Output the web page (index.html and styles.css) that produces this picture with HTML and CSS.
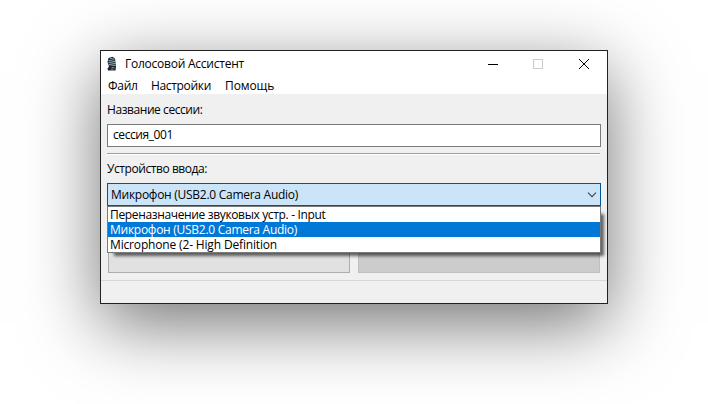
FILE: index.html
```html
<!DOCTYPE html>
<html lang="ru">
<head>
<meta charset="utf-8">
<title>Голосовой Ассистент</title>
<link rel="stylesheet" href="styles.css">
</head>
<body>
<main class="window">
  <header class="titlebar">
    <svg class="app-icon" width="12" height="16" viewBox="0 0 12 16" aria-hidden="true">
      <path d="M2.500 2 6.500.800 9 2.500 10 10.500 9.500 14.500H2L1.500 12.500 3 10.500 1.500 6z" fill="#1d242c"/>
      <path d="M4 2.500l4.500.700M2.500 4.500l6.500 1M2.500 6.500l7 1M3 8.500l6.500 1" stroke="#a9c4da" stroke-width=".900" fill="none"/>
      <path d="M5.500 11.300l3 .500M5 13.200h2.500" stroke="#85898e" stroke-width="1" fill="none"/>
    </svg>
    <h1 class="title">Голосовой Ассистент</h1>
    <div class="controls">
      <svg width="46" height="23" viewBox="0 0 46 23" shape-rendering="crispEdges"><path d="M18 12.500h10" stroke="#000"/></svg>
      <svg width="45" height="23" viewBox="0 0 45 23" shape-rendering="crispEdges"><path d="M17.500 7.500h9v9h-9z" stroke="#ccc" fill="none"/></svg>
      <svg width="46" height="23" viewBox="0 0 46 23"><path d="M18 7l10 10M28 7 18 17" stroke="#000" stroke-width="1"/></svg>
    </div>
  </header>
  <nav class="menu">
    <span class="m1">Файл</span><span class="m2">Настройки</span><span class="m3">Помощь</span>
  </nav>
  <section class="form">
    <div class="label l1">Название сессии:</div>
    <div class="input"><span>сессия_001</span></div>
    <div class="separator"></div>
    <div class="label l2">Устройство ввода:</div>
    <div class="combo">
      <span class="mic">Микрофон (USB2.0 Camera Audio)</span>
      <svg class="chevron" width="10" height="6" viewBox="0 0 10 6"><path d="M1 .700 5 4.700 9 .700" stroke="#444" stroke-width="1.100" fill="none"/></svg>
      <div class="options">
        <div class="option"><span class="o1">Переназначение звуковых устр. - Input</span></div>
        <div class="option selected"><span class="mic">Микрофон (USB2.0 Camera Audio)</span></div>
        <div class="option"><span class="o3">Microphone (2- High Definition</span></div>
      </div>
    </div>
    <div class="buttons"><div class="button"></div><div class="button disabled"></div></div>
  </section>
  <footer class="status"></footer>
</main>
</body>
</html>
```
FILE: styles.css
```css
* { box-sizing: border-box; }
html { background: #fff; }
body {
  margin: 0;
  height: 404px;
  overflow: hidden;
  padding: 50px 100px;
  font: 12px/15px "Open Sans", "Noto Sans", sans-serif;
  color: #000;
}
.window {
  width: 508px;
  height: 254px;
  border: 1px solid #222;
  background: #f0f0f0;
  box-shadow: 0 20px 68px rgba(0, 0, 0, .55);
  display: flex;
  flex-direction: column;
  white-space: nowrap;
}
.titlebar { height: 25px; display: flex; align-items: center; background: #fff; padding-left: 5px; }
.title { margin: 0 auto 0 7px; font-size: 12px; font-weight: 400; letter-spacing: -.24px; }
.controls { display: flex; }
.menu { height: 18px; display: flex; padding: 2px 0 0 7px; background: #fff; }
.m1 { width: 43px; letter-spacing: -.3px; }
.m2 { width: 74px; letter-spacing: -.33px; }
.m3 { letter-spacing: -.1px; }
.form { flex: 1; padding: 0 6px; }
.label { height: 30px; padding-top: 8px; letter-spacing: -.43px; }
.input { height: 23px; border: 1px solid #7a7a7a; background: #fff; padding: 2px 5px; letter-spacing: -.42px; }
.separator { height: 2px; margin: 6px 1px 0 0; background: linear-gradient(#a0a0a0 50%, #fff 50%); }
.l2 { height: 28px; padding-top: 6px; }
.combo {
  position: relative;
  height: 23px;
  border: 1px solid #005499;
  background: #cce4f7;
  display: flex;
  align-items: center;
  justify-content: space-between;
  padding: 0 3px;
}
.mic { letter-spacing: -.27px; }
.o1 { letter-spacing: -.35px; }
.o3 { letter-spacing: -.16px; }
.options {
  position: absolute;
  z-index: 1;
  top: 22px;
  left: -1px;
  width: 494px;
  border: 1px solid #7a7a7a;
  background: #fff;
}
.options::after {
  content: "";
  position: absolute;
  z-index: -1;
  inset: 6px -1px -1px 5px;
  box-shadow: 2px 2px 3px 1px rgba(0, 0, 0, .6);
}
.option { height: 15px; padding-left: 2px; background: #fff; }
.option.selected { background: #0078d7; color: #fff; }
.buttons { display: grid; grid-template-columns: 242px 242px; gap: 8px; padding: 37px 1px 0; }
.button { height: 30px; border: 1px solid #adadad; background: #e1e1e1; }
.disabled { border-color: #bfbfbf; background: #ccc; }
.status { height: 23px; border-top: 1px solid #d7d7d7; }
```
